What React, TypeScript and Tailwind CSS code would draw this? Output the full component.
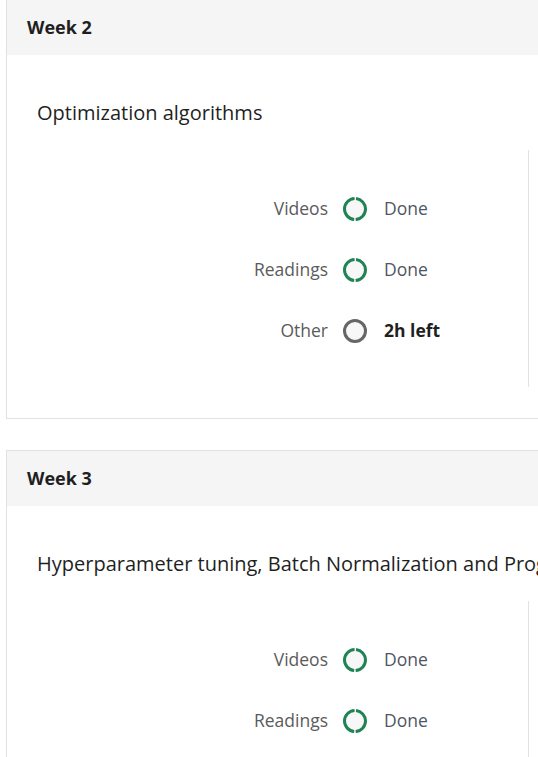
const weeks = [
  {
    week: "Week 2",
    title: "Optimization algorithms",
    items: [
      { label: "Videos", done: true, status: "Done" },
      { label: "Readings", done: true, status: "Done" },
      { label: "Other", done: false, status: "2h left" },
    ],
  },
  {
    week: "Week 3",
    title: "Hyperparameter tuning, Batch Normalization and Programming Frameworks",
    items: [
      { label: "Videos", done: true, status: "Done" },
      { label: "Readings", done: true, status: "Done" },
      { label: "Other", done: false, status: "3h left" },
    ],
  },
];

function StatusRing({ done }: { done: boolean }) {
  if (!done) {
    return (
      <svg width="24" height="24" viewBox="0 0 24 24">
        <circle cx="12" cy="12" r="10.5" fill="#f7f7f7" stroke="#666666" strokeWidth="3" />
      </svg>
    );
  }
  return (
    <svg width="24" height="24" viewBox="0 0 24 24">
      <circle
        cx="12"
        cy="12"
        r="10.5"
        fill="#f7f7f7"
        stroke="#1f8354"
        strokeWidth="3"
        strokeDasharray="31.48 1.5"
        strokeDashoffset="15.74"
      />
    </svg>
  );
}

function WeekCard({ week, title, items }: (typeof weeks)[number]) {
  return (
    <section className="w-[640px] border border-[#e1e1e1] bg-white">
      <header className="h-[55px] bg-[#f5f5f5] px-[20px] flex items-center">
        <h2 className="text-[18px] font-bold text-[#1f1f1f]">{week}</h2>
      </header>
      <div className="px-[30px] pt-[44px] pb-[31px]">
        <h3 className="text-[20px] leading-[28px] text-[#1f1f1f] whitespace-nowrap">{title}</h3>
        <div className="mt-[23px] flex">
          <div className="w-[491px] pt-[28px] pb-[26px]">
            {items.map((it) => (
              <div key={it.label} className="h-[61px] flex items-center">
                <span className="w-[291px] text-right text-[17.5px] text-[#5b5b5b]">{it.label}</span>
                <span className="ml-[15px] flex">
                  <StatusRing done={it.done} />
                </span>
                <span
                  className={
                    it.done
                      ? "ml-[17px] text-[17.5px] text-[#4f5561]"
                      : "ml-[17px] text-[17.5px] font-bold text-[#1f1f1f]"
                  }
                >
                  {it.status}
                </span>
              </div>
            ))}
          </div>
          <div className="border-l border-[#e1e1e1] flex-1" />
        </div>
      </div>
    </section>
  );
}

export default function App() {
  return (
    <div
      className="w-[538px] h-[757px] overflow-hidden bg-white"
      style={{ fontFamily: '"Open Sans", "Noto Sans", sans-serif' }}
    >
      <div className="-mt-px pl-[6px] flex flex-col gap-[31px]">
        {weeks.map((w) => (
          <WeekCard key={w.week} {...w} />
        ))}
      </div>
    </div>
  );
}
